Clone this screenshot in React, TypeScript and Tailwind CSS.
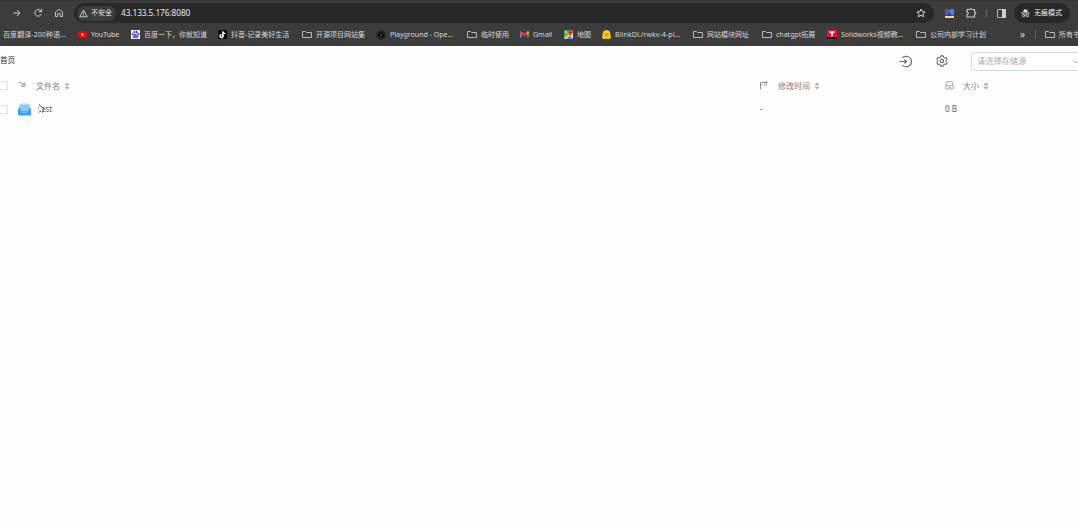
import React from 'react';

interface Bookmark {
  label: string;
  icon?: React.ReactNode;
  width: string;
  text?: string;
}

const FolderIcon = () => (
  <svg className="w-[10px] h-[9px] shrink-0" viewBox="0 0 10 9" fill="none" stroke="#b8b8b8" strokeWidth="1">
    <path d="M.5 1.500h3l1 1h5v5h-9z" />
  </svg>
);

const YoutubeIcon = () => (
  <svg className="w-[9px] h-[9px] shrink-0" viewBox="0 0 9 9">
    <rect x="0" y="1.300" width="9" height="6.400" rx="1.600" fill="#ff0000" />
    <path d="M3.600 3.100v2.800L6 4.500z" fill="#fff" />
  </svg>
);

const BaiduIcon = () => (
  <svg className="w-[9px] h-[9px] shrink-0" viewBox="0 0 18 18">
    <rect width="18" height="18" fill="#f2f3ff" />
    <g fill="#2932e1">
      <ellipse cx="3.300" cy="8.200" rx="1.800" ry="2.400" />
      <ellipse cx="6.800" cy="4" rx="1.800" ry="2.600" />
      <ellipse cx="11.400" cy="4" rx="1.800" ry="2.600" />
      <ellipse cx="14.900" cy="8.200" rx="1.800" ry="2.400" />
      <path d="M9 7.800c2 0 2.600 2 4.200 3.400 2 1.800 1.300 5.300-1.300 5.300-1 0-1.800-.4-2.900-.4s-1.900.4-2.900.4c-2.600 0-3.300-3.500-1.300-5.300C6.400 9.800 7 7.800 9 7.800z" />
    </g>
    <path d="M7 11.500v2.800h1.600M10 11.500v2.800h2" stroke="#fff" fill="none" />
  </svg>
);

const TiktokIcon = () => (
  <svg className="w-[9px] h-[9px] shrink-0" viewBox="0 0 18 18" fill="none" strokeWidth="2.400">
    <rect width="18" height="18" rx="3" fill="#050505" />
    <path d="M9.200 2.500v9.200A2.800 2.800 0 1 1 6.400 9M9.200 3c.4 2.500 2.200 3.500 4.500 3.700" stroke="#25f4ee" />
    <path d="M10.800 3.500v9.200A2.800 2.800 0 1 1 8 10M10.800 4c.4 2.500 2.200 3.500 4.500 3.700" stroke="#fe2c55" />
    <path d="M10 3v9.200a2.800 2.800 0 1 1-2.800-2.700M10 3.500c.4 2.500 2.200 3.500 4.500 3.700" stroke="#fff" />
  </svg>
);

const KnotIcon = () => (
  <svg className="w-[10px] h-[10px] shrink-0" viewBox="0 0 20 20" fill="none" stroke="#0a0a0a" strokeWidth="1.500">
    {[0, 60, 120, 180, 240, 300].map((angle) => (
      <path key={angle} transform={`rotate(${angle} 10 10)`} d="M6.300 12V4.800a3.700 3.700 0 0 1 6.800-2M6.500 7.800l4-2.300 5.500 3.200" />
    ))}
  </svg>
);

const GmailIcon = () => (
  <svg className="w-[9px] h-[9px] shrink-0" viewBox="0 0 18 18">
    <path d="M0 4v11h4V7z" fill="#4285f4" />
    <path d="M18 4v11h-4V7z" fill="#34a853" />
    <path d="M0 4.500C0 2.500 2.200 2 3.500 3L9 7.200 14.500 3v5.200L9 12.300 0 6z" fill="#ea4335" />
    <path d="M14 3.400c1.500-1.400 4-.9 4 1.100V6l-4 3z" fill="#fbbc04" />
  </svg>
);

const MapsIcon = () => (
  <svg className="w-[9px] h-[9px] shrink-0" viewBox="0 0 18 18">
    <rect width="18" height="18" rx="2" fill="#34a853" />
    <path d="M0 18 18 1v17z" fill="#dfe3e6" />
    <path d="M0 15 13 3l2 3L3 18z" fill="#fbbc04" />
    <path d="M11 11l7 7H6z" fill="#4285f4" />
    <path d="M13 0a4.500 4.500 0 0 1 4.500 4.500C17.500 8 13 12 13 12S8.500 8 8.500 4.500A4.500 4.500 0 0 1 13 0z" fill="#ea4335" />
    <circle cx="13" cy="4.500" r="1.600" fill="#811411" />
    <path d="M6.500 4.500h-2M6.500 4.700a2.200 2.200 0 1 1-.8-1.900" stroke="#fff" fill="none" />
  </svg>
);

const HugIcon = () => (
  <svg className="w-[9px] h-[9px] shrink-0" viewBox="0 0 18 18">
    <circle cx="9" cy="8.500" r="7.800" fill="#ffd21e" />
    <rect x="0.500" y="10" width="7" height="8" rx="2.500" fill="#ffc21a" />
    <rect x="10.500" y="10" width="7" height="8" rx="2.500" fill="#ffc21a" />
    <rect x="5" y="12" width="8" height="5.500" fill="#ffc21a" />
    <circle cx="6" cy="6.500" r="1.100" fill="#5c4b20" />
    <circle cx="12" cy="6.500" r="1.100" fill="#5c4b20" />
    <path d="M6 9.200h6c0 3-6 3-6 0z" fill="#8a5a18" />
  </svg>
);

const RedTIcon = () => (
  <svg className="w-[10px] h-[9px] shrink-0" viewBox="0 0 10 9">
    <rect width="10" height="7" fill="#f8062f" />
    <rect y="7" width="10" height="2" fill="#0a0a0a" />
    <path d="M2.300 1.200h5.400v1.500H5.900v3.500H4.100V2.700H2.300z" fill="#fff" />
  </svg>
);

const bookmarks: Bookmark[] = [
  { label: '百度翻译-200种语...', width: 'w-[75px]', text: 'tracking-[0.08px]' },
  { label: 'YouTube', icon: <YoutubeIcon />, width: 'w-[53px]' },
  { label: '百度一下，你就知道', icon: <BaiduIcon />, width: 'w-[87px]' },
  { label: '抖音-记录美好生活', icon: <TiktokIcon />, width: 'w-[84px]' },
  { label: '开源项目网站集', icon: <FolderIcon />, width: 'w-[74px]' },
  { label: 'Playground - Ope...', icon: <KnotIcon />, width: 'w-[91px]' },
  { label: '临时使用', icon: <FolderIcon />, width: 'w-[53px]' },
  { label: 'Gmail', icon: <GmailIcon />, width: 'w-[44px]' },
  { label: '地图', icon: <MapsIcon />, width: 'w-[38px]' },
  { label: 'BlinkDL/rwkv-4-pi...', icon: <HugIcon />, width: 'w-[91px]', text: 'tracking-[0.1px]' },
  { label: '网站模块网址', icon: <FolderIcon />, width: 'w-[69px]' },
  { label: 'chatgpt拓展', icon: <FolderIcon />, width: 'w-[65px]' },
  { label: 'Solidworks视频教...', icon: <RedTIcon />, width: 'w-[89px]' },
  { label: '公司内部学习计划', icon: <FolderIcon />, width: 'w-[104px]' },
];

const AddressBar = () => (
  <div className="w-[860px] h-5 rounded-full bg-[#282828] flex items-center pl-[3px] pr-[8px]">
    <div className="w-[39px] h-[15px] rounded-full bg-[#3c3c3c] flex items-center gap-[3px] pl-[2px]">
      <svg className="w-[9px] h-[9px]" viewBox="0 0 9 9" fill="none" stroke="#d8d8d8" strokeWidth="0.900">
        <path d="M4.500 1 8.300 7.800H0.700zM4.500 3.400v2M4.500 6.200v.8" />
      </svg>
      <span className="text-[7px] text-[#e3e3e3] whitespace-nowrap">不安全</span>
    </div>
    <span className="ml-[5px] text-[8.300px] tracking-[-0.08px] text-[#e8e8e8]">43.133.5.176:8080</span>
    <svg className="ml-auto w-[10px] h-[10px]" viewBox="0 0 20 20" fill="none" stroke="#d5d5d5" strokeWidth="2">
      <path d="M10 2l2.400 5.300 5.800.6-4.300 3.900 1.200 5.700L10 14.600l-5.100 2.900 1.200-5.700L1.800 7.900l5.800-.6z" />
    </svg>
  </div>
);

const BrowserChrome = () => (
  <header className="h-[46px] bg-[#3c3c3c] text-[#d8d8d8] overflow-hidden">
    <div className="h-[25px] flex items-center pl-3 border-t border-[#363636]">
      <svg className="w-[10px] h-[10px]" viewBox="0 0 10 10" fill="none" stroke="#cfcfcf">
        <path d="M1.500 5h6.500M5 2l3 3-3 3" />
      </svg>
      <svg className="ml-[11px] w-[10px] h-[10px]" viewBox="0 0 10 10" fill="none" stroke="#cfcfcf">
        <path d="M8.200 6.100A3.300 3.300 0 1 1 7.500 2.600L8.500 3.600M8.500 1v2.700H5.800" />
      </svg>
      <svg className="ml-[11px] w-[10px] h-[10px]" viewBox="0 0 10 10" fill="none" stroke="#c4c4c4">
        <path d="M1.500 8.500V4L5 1.300 8.500 4v4.500H6.300V5.700H3.700v2.800z" />
      </svg>
      <div className="ml-[10px]">
        <AddressBar />
      </div>
      <svg className="ml-[11px] w-[9px] h-[9px]" viewBox="0 0 9 9">
        <path d="M0 0h3.500l1 1.200v5H0z" fill="#5c4fc4" />
        <path d="M9 0H5.500l-1 1.200v5H9z" fill="#3f86f5" />
        <path d="M2.700 6.200 4.500 3.200l1.800 3z" fill="#3c3c6a" />
        <rect y="7" width="9" height="2" fill="#fbdc7c" />
      </svg>
      <svg className="ml-3 w-[11px] h-[10px]" viewBox="0 0 11 10" fill="none" stroke="#c9c9c9" strokeWidth="1.100">
        <path d="M1 1.500h2.800C4 .4 5.800.4 6 1.500h2.500V4c1.700 0 1.700 2.200 0 2.200V9H1V6.700c1.600-.2 1.600-2.400 0-2.600z" />
      </svg>
      <span className="ml-[9px] w-px h-2 bg-[#6a6a6a]" />
      <svg className="ml-[10px] w-[9px] h-[9px]" viewBox="0 0 9 9">
        <path d="M.5.500h8v8h-8z" fill="none" stroke="#b5b5b5" strokeWidth="1" />
        <path d="M5 0h4v9H5z" fill="#d0d0d0" />
      </svg>
      <div className="ml-2 w-[56px] h-5 rounded-full bg-[#282828] flex items-center gap-[4px] pl-[7px]">
        <svg className="w-[9px] h-[10px] shrink-0" viewBox="0 0 10 10" fill="#e4e4e4">
          <path d="M2.500 4 3.300.800 5 1.300 6.700.800 7.500 4zM.3 4.500h9.400v1.100H.3z" />
          <circle cx="2.900" cy="7.800" r="1.300" fill="none" stroke="#e4e4e4" />
          <circle cx="7.100" cy="7.800" r="1.300" fill="none" stroke="#e4e4e4" />
          <path d="M4.200 7h1.600v.8H4.200z" />
        </svg>
        <span className="text-[7px] text-[#f0f0f0] whitespace-nowrap">无痕模式</span>
      </div>
    </div>
    <nav className="h-[19px] flex items-center pl-[3px] text-[7px] leading-none">
      {bookmarks.map((b) => (
        <div key={b.label} className={`${b.width} shrink-0 flex items-center gap-[4px] whitespace-nowrap`}>
          {b.icon}
          <span className={b.text}>{b.label}</span>
        </div>
      ))}
      <span className="text-[10px] leading-none w-[15px] shrink-0 pb-[2px]">»</span>
      <span className="w-px h-[9px] bg-[#626262] shrink-0 mr-[9px]" />
      <FolderIcon />
      <span className="ml-[4px] whitespace-nowrap">所有书签</span>
    </nav>
  </header>
);

const SortIcon = () => (
  <svg className="ml-[4px] w-[6px] h-[8px]" viewBox="0 0 6 8" fill="#a8abb2">
    <path d="M.4 3.300 3 .500l2.600 2.800zM.4 4.700h5.200L3 7.500z" />
  </svg>
);

const Checkbox = () => (
  <span className="w-[8px] h-[9px] border border-l-0 border-[#dfe2ea] rounded-r-[1px] bg-white shrink-0" />
);

const Toolbar = () => (
  <div className="h-[30px] flex items-center">
    <span className="text-[7.500px] text-[#303133] w-[899px] shrink-0">首页</span>
    <svg className="w-[13px] h-[13px] shrink-0 mt-px" viewBox="0 0 13 13" fill="none" stroke="#5f6478" strokeWidth="1.100">
      <path d="M3.200 3A5.300 5.300 0 1 1 3.200 10M.5 6.500h7M5.500 4.500l2 2-2 2" />
    </svg>
    <svg className="ml-6 w-3 h-3 shrink-0 mb-px" viewBox="0 0 24 24" fill="none" stroke="#4b4e55" strokeWidth="2">
      <path d="M9.800 1.500h4.400l.8 3 2.300 1.300 3-.9 2.200 3.900-2.200 2.100v2.200l2.200 2.100-2.200 3.900-3-.9-2.300 1.300-.8 3H9.800l-.8-3-2.300-1.300-3 .9-2.200-3.900 2.200-2.100v-2.200L1.500 8.800l2.200-3.900 3 .9L9 4.500z" />
      <circle cx="12" cy="12" r="3.500" />
    </svg>
    <div className="ml-[23px] w-[116px] h-[19px] shrink-0 rounded-[3px] border border-[#d6dae3] bg-white flex items-center pl-[5px] mt-px">
      <span className="text-[8.200px] text-[#a8abb2] w-[96px] whitespace-nowrap">请选择存储源</span>
      <svg className="w-[6px] h-[4px]" viewBox="0 0 6 4" fill="none" stroke="#a8abb2" strokeWidth="0.900">
        <path d="M.5.500 3 3 5.500.500" />
      </svg>
    </div>
  </div>
);

const FileTable = () => (
  <div className="text-[8px]">
    <div className="h-[19px] flex items-center text-[#7d8086]">
      <div className="w-[759px] shrink-0 flex items-center">
        <Checkbox />
        <svg className="ml-[10px] mb-[3px] w-[8px] h-[7px]" viewBox="0 0 8 7" fill="none" stroke="#85888e" strokeWidth="0.800">
          <path d="M1 1.500h2.500l.7 1h3v2.700H5M2.500 4h4M3.500 5.500h2" />
        </svg>
        <span className="ml-[10px]">文件名</span>
        <SortIcon />
      </div>
      <div className="w-[185px] shrink-0 flex items-center">
        <svg className="w-[10px] h-[9px] mr-[9px]" viewBox="0 0 10 9" fill="none" stroke="#85888e" strokeWidth="0.900">
          <path d="M1.500 8.500v-7h7M7.500 0v3M1.500 4h2M5 4h3" />
        </svg>
        <span>修改时间</span>
        <SortIcon />
      </div>
      <div className="flex items-center">
        <svg className="ml-px w-[9px] h-[9px] mr-[9px]" viewBox="0 0 9 9" fill="none" stroke="#92959b" strokeWidth="0.800">
          <path d="M2 .800h5c.5 0 .8.300.8.800v3H1.200v-3c0-.5.300-.8.800-.8zM.7 4.600v2.700c0 .5.300.7.800.7h6c.5 0 .8-.2.800-.7V4.600M2.800 6.300h3.400" />
        </svg>
        <span>大小</span>
        <SortIcon />
      </div>
    </div>
    <div className="mt-[2px] h-[24px] flex items-center text-[#606266]">
      <div className="w-[759px] shrink-0 flex items-center">
        <Checkbox />
        <svg className="ml-[10px] w-[13px] h-[13px]" viewBox="0 0 13 13">
          <rect x="2" y="0.500" width="9" height="2" rx="0.500" fill="#b5dffc" />
          <rect x="1" y="2" width="11" height="7" rx="0.800" fill="#86cbfa" />
          <path d="M0 6.500C0 5.700.5 5.200 1.200 5.200H2.500v3h8v-3h1.300c.7 0 1.200.5 1.200 1.300v4.800c0 .8-.5 1.200-1.200 1.200H1.200C.5 12.500 0 12.100 0 11.300z" fill="#3b9ff5" />
          <path d="M3.500 9.500h6" stroke="#8dccfb" strokeWidth="0.700" />
        </svg>
        <div className="relative ml-[7px]">
          <span>test</span>
          {/* mouse pointer resting on the row name */}
          <svg className="absolute left-0 top-0 w-[8px] h-[12px]" viewBox="0 0 8 12">
            <path d="M1 1v8.200l1.500-1.200L3.600 9.500 5 9 5.500 5.700z" fill="#fdfdfd" />
            <path d="M1 1.500 6 6M5 6 4.500 9.500M1 9.500l2-2" stroke="#1c1c1c" strokeWidth="1" strokeDasharray="1.700 0.500" fill="none" />
          </svg>
        </div>
      </div>
      <span className="w-[186px] shrink-0 pl-px">-</span>
      <span className="text-[8.200px]">0 B</span>
    </div>
  </div>
);

export default function App() {
  return (
    <div className="w-full h-screen overflow-hidden bg-[#fdfdfd] font-['Noto_Sans','Noto_Sans_CJK_SC',sans-serif]">
      <BrowserChrome />
      <main>
        <Toolbar />
        <FileTable />
      </main>
    </div>
  );
}
